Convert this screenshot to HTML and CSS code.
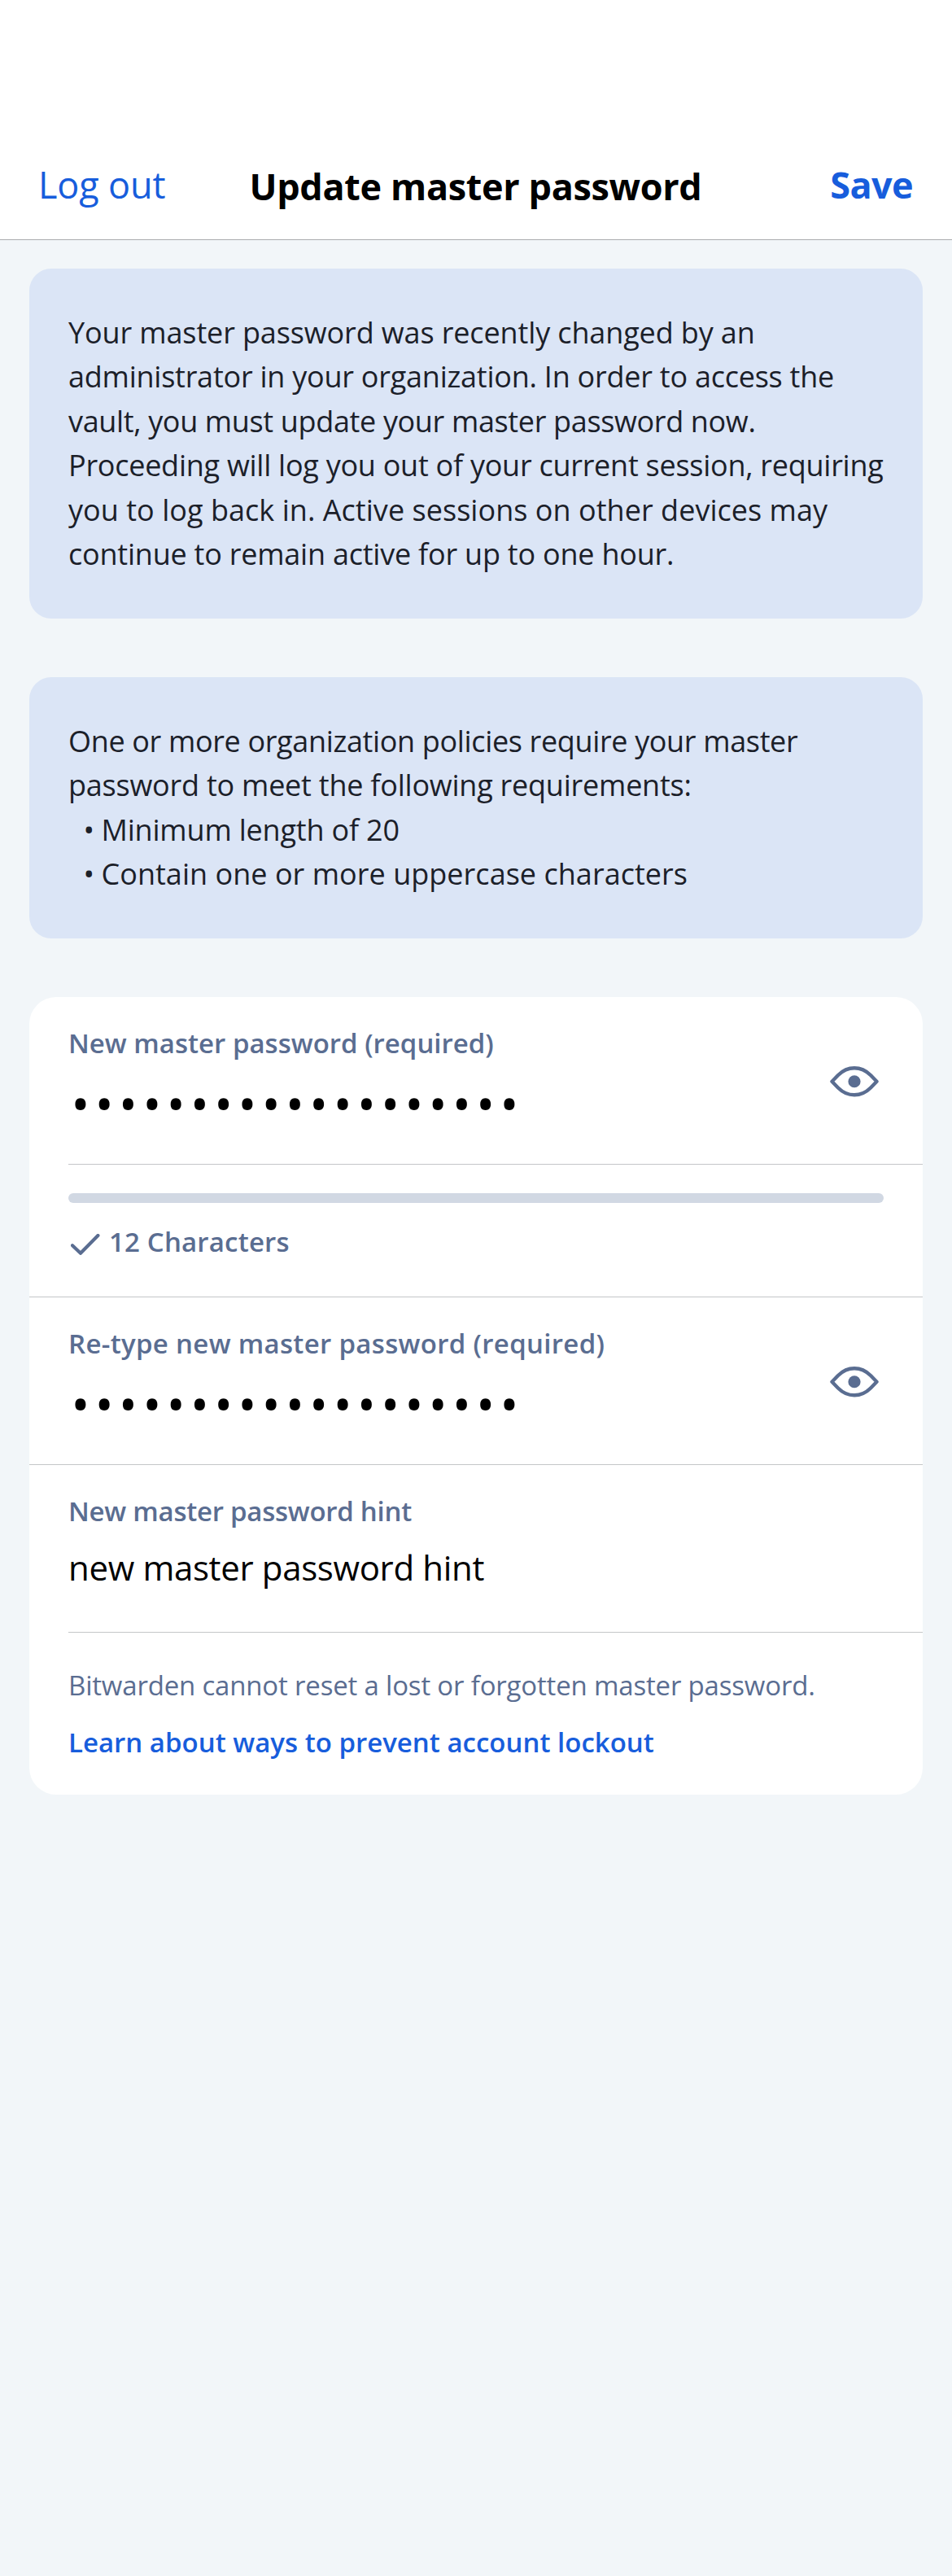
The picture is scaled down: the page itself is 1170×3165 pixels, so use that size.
FILE: index.html
```html
<!DOCTYPE html>
<html lang="en">
<head>
<meta charset="utf-8">
<title>Update master password</title>
<link rel="stylesheet" href="styles.css">
</head>
<body>
<header class="navbar">
  <a class="nav-action logout">Log out</a>
  <h1 class="nav-title">Update master password</h1>
  <a class="nav-action save">Save</a>
</header>
<main class="content">
  <section class="notice">
    <span class="line t1">Your master password was recently changed by an</span>
    <span class="line t2">administrator in your organization. In order to access the</span>
    <span class="line t3">vault, you must update your master password now.</span>
    <span class="line t4">Proceeding will log you out of your current session, requiring</span>
    <span class="line t5">you to log back in. Active sessions on other devices may</span>
    <span class="line t6">continue to remain active for up to one hour.</span>
  </section>
  <section class="notice">
    <span class="line t7">One or more organization policies require your master</span>
    <span class="line t8">password to meet the following requirements:</span>
    <ul class="rules">
      <li class="rule"><span class="bullet">•</span><span class="line t9">Minimum length of 20</span></li>
      <li class="rule"><span class="bullet">•</span><span class="line t10">Contain one or more uppercase characters</span></li>
    </ul>
  </section>
  <section class="form">
    <div class="field inset">
      <div class="field-text">
        <div class="label">New master password (required)</div>
        <div class="dots">•••••••••••••••••••</div>
      </div>
      <svg class="eye" viewBox="0 0 60 38"><path d="M2.5 18.75L10 11C16 5 22 2.2 30 2.2C38 2.2 44 5 50 11L57.5 18.75L50 26.5C44 32.5 38 35.3 30 35.3C22 35.3 16 32.5 10 26.5Z"/><circle cx="30" cy="18.75" r="7.6"/></svg>
    </div>
    <div class="strength">
      <div class="bar"></div>
      <div class="count">
        <svg class="check" viewBox="0 0 36 26"><path d="M2 14.2L12 23.8L33.4 2"/></svg>
        <span class="label t11">12 Characters</span>
      </div>
    </div>
    <div class="field full">
      <div class="field-text">
        <div class="label t12">Re-type new master password (required)</div>
        <div class="dots">•••••••••••••••••••</div>
      </div>
      <svg class="eye" viewBox="0 0 60 38"><path d="M2.5 18.75L10 11C16 5 22 2.2 30 2.2C38 2.2 44 5 50 11L57.5 18.75L50 26.5C44 32.5 38 35.3 30 35.3C22 35.3 16 32.5 10 26.5Z"/><circle cx="30" cy="18.75" r="7.6"/></svg>
    </div>
    <div class="field inset">
      <div class="field-text">
        <div class="label t13">New master password hint</div>
        <div class="value">new master password hint</div>
      </div>
    </div>
    <div class="footer">
      <div class="help">Bitwarden cannot reset a lost or forgotten master password.</div>
      <a class="learn">Learn about ways to prevent account lockout</a>
    </div>
  </section>
</main>
</body>
</html>
```
FILE: styles.css
```css
* { box-sizing: border-box; }
body {
  margin: 0;
  min-height: 3165px;
  background: #f2f6f9;
  font-family: "Open Sans", sans-serif;
}
.navbar {
  height: 295px;
  padding: 197px 48px 0 47px;
  display: grid;
  grid-template-columns: 1fr auto 1fr;
  align-items: start;
  background: #fff;
  border-bottom: 1px solid #aaacaf;
  font-size: 45px;
  line-height: 60px;
}
.nav-action { color: #175ddc; }
.logout { letter-spacing: -0.14px; }
.save { justify-self: end; font-weight: 700; letter-spacing: -0.6px; }
.nav-title {
  margin: 0;
  padding-top: 2px;
  font-size: inherit;
  font-weight: 700;
  letter-spacing: -0.35px;
  color: #000;
}
.content {
  display: flex;
  flex-direction: column;
  padding: 35px 36px 0;
}
.notice {
  padding: 52px 48px 0;
  border-radius: 27px;
  background: #dbe5f6;
  color: #1b2029;
  font-size: 36px;
  line-height: 54.4px;
}
.notice:nth-child(1) { height: 430px; margin-bottom: 72px; }
.notice:nth-child(2) { height: 321px; margin-bottom: 72px; }
.line { display: block; white-space: nowrap; }
.rules { margin: 0; padding: 0 0 0 18.5px; list-style: none; }
.rule { display: flex; }
.bullet { width: 22px; }
.t1 { letter-spacing: -0.129px; }
.t2 { letter-spacing: -0.244px; }
.t3 { letter-spacing: -0.355px; }
.t4 { letter-spacing: -0.264px; }
.t5 { letter-spacing: 0.034px; }
.t6 { letter-spacing: -0.225px; }
.t7 { letter-spacing: -0.352px; }
.t8 { letter-spacing: -0.232px; }
.t9 { letter-spacing: -0.19px; }
.t10 { letter-spacing: 0.03px; }
.t11 { letter-spacing: 0.174px; }
.t12 { letter-spacing: 0.31px; }
.t13 { letter-spacing: -0.264px; }
.form {
  height: 980px;
  border-radius: 33px;
  overflow: hidden;
  background: #fff;
}
.field {
  height: 206px;
  display: flex;
  align-items: center;
  justify-content: space-between;
  padding-right: 54px;
  border-bottom: 1px solid #c4c6c8;
}
.field-text { align-self: stretch; padding-top: 35px; }
.inset { margin-left: 48px; }
.full { padding-left: 48px; }
.label {
  font-size: 33px;
  line-height: 44px;
  font-weight: 600;
  color: #5a6d91;
  white-space: nowrap;
}
.dots {
  margin-top: 21px;
  padding-left: 3.3px;
  font-size: 62px;
  line-height: 60px;
  letter-spacing: 5.97px;
  color: #000;
}
.value {
  margin-top: 19px;
  font-size: 42px;
  line-height: 56px;
  letter-spacing: -0.35px;
  color: #000;
}
.eye { width: 60px; height: 38px; margin-top: 2px; }
.eye path { fill: none; stroke: #5a6d91; stroke-width: 4.4; stroke-linejoin: round; }
.eye circle { fill: #5a6d91; }
.strength {
  height: 163px;
  padding: 35px 48px 0;
  border-bottom: 1px solid #c4c6c8;
}
.bar { height: 12px; border-radius: 6px; background: #d1d8e3; }
.count { display: flex; align-items: center; gap: 11px; margin-top: 26px; padding-left: 3px; }
.check { width: 36px; height: 26px; margin-top: 5px; }
.check path { fill: none; stroke: #5a6d91; stroke-width: 4.2; stroke-linecap: round; stroke-linejoin: round; }
.footer {
  padding: 43px 48px 0;
  font-size: 33px;
  line-height: 44px;
  white-space: nowrap;
}
.help { letter-spacing: -0.185px; color: #5a6d91; }
.learn { display: block; margin-top: 26px; font-weight: 600; color: #175ddc; }
```
